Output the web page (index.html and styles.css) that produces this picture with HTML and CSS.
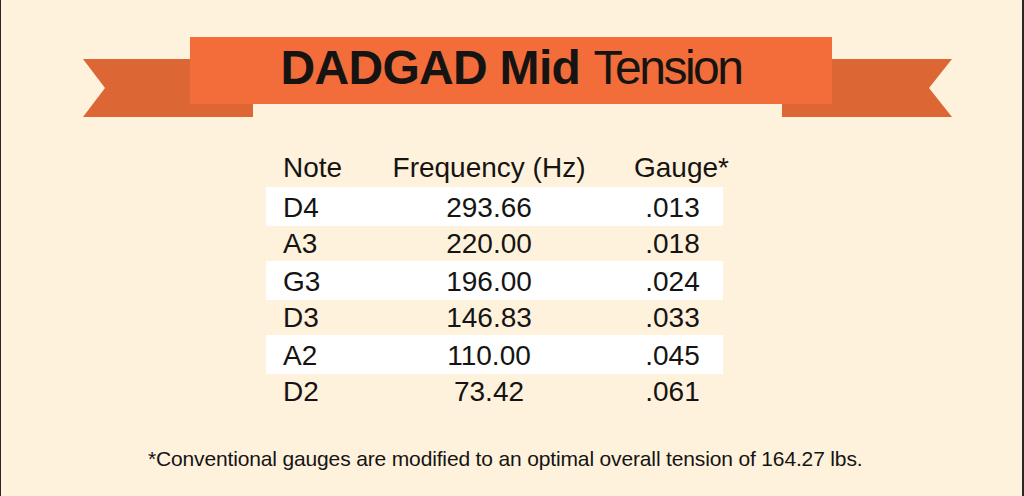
FILE: index.html
```html
<!DOCTYPE html>
<html lang="en">
<head>
<meta charset="utf-8">
<title>DADGAD Mid Tension</title>
<link rel="stylesheet" href="styles.css">
</head>
<body>
<div class="page">
  <header class="ribbon">
    <svg class="ribbon-tails" width="1021" height="130" viewBox="0 0 1021 130" aria-hidden="true">
      <polygon points="82,59 252,59 252,117 82,117 104,88" fill="#DC6634"/>
      <polygon points="781,59 951,59 928,88 951,117 781,117" fill="#DC6634"/>
    </svg>
    <h1 class="ribbon-main"><span class="title-bold">DADGAD Mid</span> <span class="title-light">Tension</span></h1>
  </header>

  <div class="strings">
    <div class="row head"><span class="c-note">Note</span><span class="c-freq">Frequency (Hz)</span><span class="c-gauge">Gauge*</span></div>
    <div class="row odd"><span class="c-note">D4</span><span class="c-freq">293.66</span><span class="c-gauge">.013</span></div>
    <div class="row even"><span class="c-note">A3</span><span class="c-freq">220.00</span><span class="c-gauge">.018</span></div>
    <div class="row odd"><span class="c-note">G3</span><span class="c-freq">196.00</span><span class="c-gauge">.024</span></div>
    <div class="row even"><span class="c-note">D3</span><span class="c-freq">146.83</span><span class="c-gauge">.033</span></div>
    <div class="row odd"><span class="c-note">A2</span><span class="c-freq">110.00</span><span class="c-gauge">.045</span></div>
    <div class="row even"><span class="c-note">D2</span><span class="c-freq">73.42</span><span class="c-gauge">.061</span></div>
  </div>

  <p class="footnote">*Conventional gauges are modified to an optimal overall tension of 164.27 lbs.</p>
</div>
</body>
</html>
```

FILE: styles.css
```css
html, body {
  margin: 0;
  padding: 0;
}
body {
  background: #FEF2DD;
  font-family: "Liberation Sans", Arial, sans-serif;
  color: #161412;
}
.page {
  width: 1021px;
  height: 496px;
  border-left: 1px solid #2a2622;
  border-right: 2px solid #2a2622;
  background: #FEF2DD;
  box-sizing: content-box;
  overflow: hidden;
}
.ribbon {
  position: relative;
  padding-top: 37px;
  height: 67px;
}
.ribbon-tails {
  position: absolute;
  left: 0;
  top: 0;
}
.ribbon-main {
  position: relative;
  margin: 0 0 0 189px;
  width: 642px;
  height: 67px;
  line-height: 62px;
  background: #F26D39;
  text-align: center;
  font-size: 48px;
  color: #161412;
  white-space: nowrap;
}
.title-bold {
  font-weight: 700;
  letter-spacing: -0.7px;
}
.title-light {
  font-weight: 400;
  letter-spacing: -2.5px;
}
.strings {
  margin: 47px 0 0 265px;
  width: 457px;
  font-size: 28px;
}
.row {
  display: grid;
  grid-template-columns: 124px 198px 135px;
  line-height: 34px;
  box-sizing: border-box;
}
.row.head {
  height: 36px;
}
.row.odd {
  background: #ffffff;
  height: 39px;
  padding-top: 4px;
}
.row.even {
  height: 35px;
  padding-top: 1px;
}
.c-note {
  padding-left: 17px;
}
.c-freq {
  text-align: center;
}
.c-gauge {
  text-align: center;
  padding-left: 34px;
}
.head .c-gauge {
  padding-left: 46px;
}
.footnote {
  margin: 38px 0 0 147px;
  font-size: 21px;
  line-height: 24px;
  letter-spacing: -0.15px;
  white-space: nowrap;
}
```
